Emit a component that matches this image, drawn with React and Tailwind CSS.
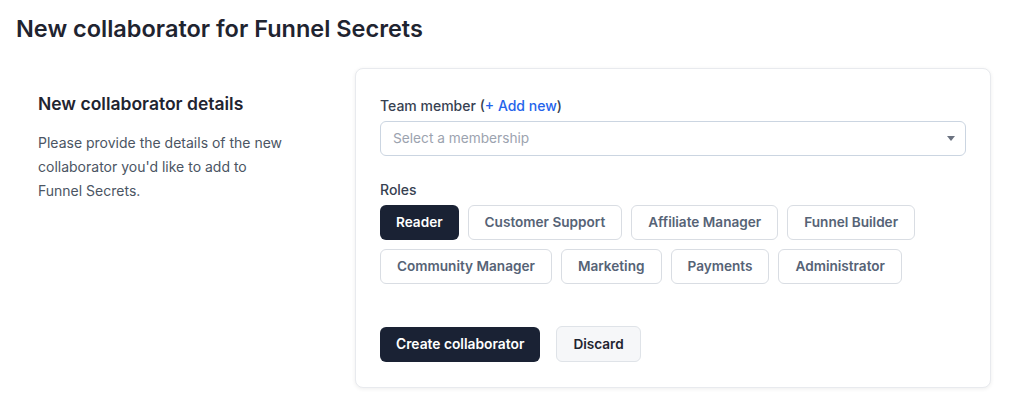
import { useState } from 'react';

const roles = [
  'Reader',
  'Customer Support',
  'Affiliate Manager',
  'Funnel Builder',
  'Community Manager',
  'Marketing',
  'Payments',
  'Administrator',
];

export default function App() {
  const [selected, setSelected] = useState('Reader');

  return (
    <div className="min-h-screen bg-white font-['Inter',sans-serif] text-[#1f2937]">
      <h1 className="pl-4 pt-[14px] text-[23.5px] font-semibold leading-[30px] text-[#1f2430]">
        New collaborator for Funnel Secrets
      </h1>

      <div className="mt-[24px] flex pl-4 pr-[33px]">
        <div className="w-[339px] shrink-0 pl-[22px] pt-[24px]">
          <h2 className="text-[17.5px] font-semibold leading-6 text-[#1f2430]">New collaborator details</h2>
          <p className="mt-[15px] w-[252px] text-[14px] leading-6 text-[#4b5563]">
            Please provide the details of the new collaborator you'd like to add to Funnel Secrets.
          </p>
        </div>

        <div className="flex-1 rounded-lg border border-[#e8eaee] bg-white px-[24px] pt-[27px] pb-[25px] shadow-[0_1px_4px_rgba(0,0,0,0.07)]">
          <label className="block text-[14px] font-medium leading-5 text-[#374151]">
            Team member (<span className="text-[#2563eb]">+ Add new</span>)
          </label>
          <div className="mt-[5px] flex h-[35px] items-center justify-between rounded-md border border-[#cbd5e1] px-3">
            <span className="text-[13.7px] text-[#9ca3af]">Select a membership</span>
            <svg width="8" height="5" viewBox="0 0 8 5" className="mr-[-2px]">
              <path d="M0 0h8L4 5z" fill="#6b7280" />
            </svg>
          </div>

          <div className="mt-[24px] text-[14px] font-medium leading-5 text-[#374151]">Roles</div>
          <div className="mt-[5px] flex w-[560px] flex-wrap gap-[9px]">
            {roles.map((r) => (
              <button
                key={r}
                onClick={() => setSelected(r)}
                className={
                  r === selected
                    ? 'h-[35px] rounded-md bg-[#1a2234] px-4 text-[13.6px] font-semibold text-white'
                    : 'h-[35px] rounded-md border border-[#d9dde3] bg-white px-4 text-[13.6px] font-semibold text-[#566376]'
                }
              >
                {r}
              </button>
            ))}
          </div>

          <div className="mt-[43px] flex gap-4">
            <button className="h-[35px] rounded-md bg-[#1a2234] px-4 text-[13.8px] font-semibold text-white">
              Create collaborator
            </button>
            <button className="h-[36px] mt-[-1px] rounded-md border border-[#dfe3e8] bg-[#f6f7f9] px-4 text-[13.6px] font-semibold text-[#1f2430]">
              Discard
            </button>
          </div>
        </div>
      </div>
    </div>
  );
}
